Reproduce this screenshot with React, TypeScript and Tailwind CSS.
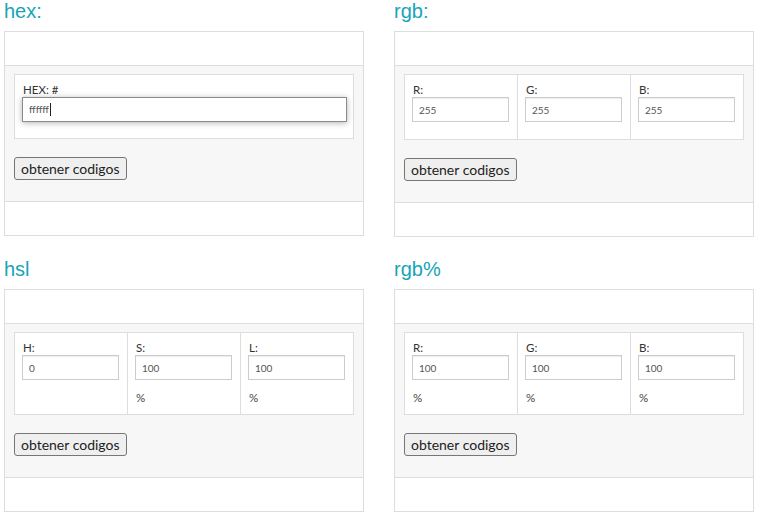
import React from "react";

type Field = { label: string; value: string; pct?: boolean };

function Heading({ children }: { children: React.ReactNode }) {
  return (
    <h4 className="mb-[9px] h-[22px] font-['Liberation_Sans',Arial,sans-serif] text-[20px] leading-[22px] text-[#17a5b6]">
      {children}
    </h4>
  );
}

function FieldCell({ field, showPct }: { field: Field; showPct: boolean }) {
  return (
    <div className="flex-1 border-l border-[#dddddd] pt-[8px] pr-[8px] pb-[8px] pl-[7px] first:border-l-0">
      <div className="h-[14px] pl-[1px] text-[11.5px] leading-[14px] text-[#333333]">{field.label}</div>
      <input
        readOnly
        value={field.value}
        className="block h-[25px] w-full border border-[#cccccc] bg-white px-[6px] text-[10px] text-[#555555] shadow-[inset_0_1px_1px_rgba(0,0,0,0.075)] outline-none"
      />
      <div className="h-[9px]" />
      {showPct ? (
        <div className="h-[17px] pl-[1px] pt-[1px] text-[11.5px] leading-[15px] text-[#444444]">{field.pct ? "%" : ""}</div>
      ) : null}
    </div>
  );
}

function Panel({ title, fields, hex }: { title: string; fields?: Field[]; hex?: boolean }) {
  const showPct = !!fields?.some((f) => f.pct);
  return (
    <div>
      <Heading>{title}</Heading>
      <div className="border border-[#dddddd] bg-white">
        <div className="h-[33px]" />
        <div className="border-y border-[#dddddd] bg-[#f7f7f7] px-[9px] pt-[8px] pb-[21px]">
          {hex ? (
            <div className="border border-[#dddddd] bg-white pt-[8px] pr-[6px] pb-[16px] pl-[7px]">
              <div className="h-[14px] pl-[1px] text-[11.5px] leading-[14px] text-[#333333]">HEX: #</div>
              <div className="flex h-[25px] w-full items-center border border-[#8a8a8a] bg-white px-[6px] text-[10px] text-[#555555] shadow-[0_1px_6px_rgba(0,0,0,0.3)]">
                ffffff
                <span className="ml-[1px] inline-block h-[13px] w-px bg-[#222222]" />
              </div>
            </div>
          ) : (
            <div className="flex border border-[#dddddd] bg-white">
              {fields!.map((f) => (
                <FieldCell key={f.label} field={f} showPct={showPct} />
              ))}
            </div>
          )}
          <button
            type="button"
            className="mt-[18px] h-[23px] rounded-[3px] border border-[#767676] bg-[#efefef] px-[6px] text-[14px] leading-[18px] text-[#222222]"
          >
            obtener codigos
          </button>
        </div>
        <div className="h-[33px]" />
      </div>
    </div>
  );
}

export default function App() {
  return (
    <div className="min-h-[519px] w-[762px] bg-white font-['Lato','Open_Sans',sans-serif]">
      <div className="grid grid-cols-[360px_360px] gap-x-[30px] gap-y-[21px] pl-[4px]">
        <Panel title="hex:" hex />
        <Panel
          title="rgb:"
          fields={[
            { label: "R:", value: "255" },
            { label: "G:", value: "255" },
            { label: "B:", value: "255" },
          ]}
        />
        <Panel
          title="hsl"
          fields={[
            { label: "H:", value: "0" },
            { label: "S:", value: "100", pct: true },
            { label: "L:", value: "100", pct: true },
          ]}
        />
        <Panel
          title="rgb%"
          fields={[
            { label: "R:", value: "100", pct: true },
            { label: "G:", value: "100", pct: true },
            { label: "B:", value: "100", pct: true },
          ]}
        />
      </div>
    </div>
  );
}
